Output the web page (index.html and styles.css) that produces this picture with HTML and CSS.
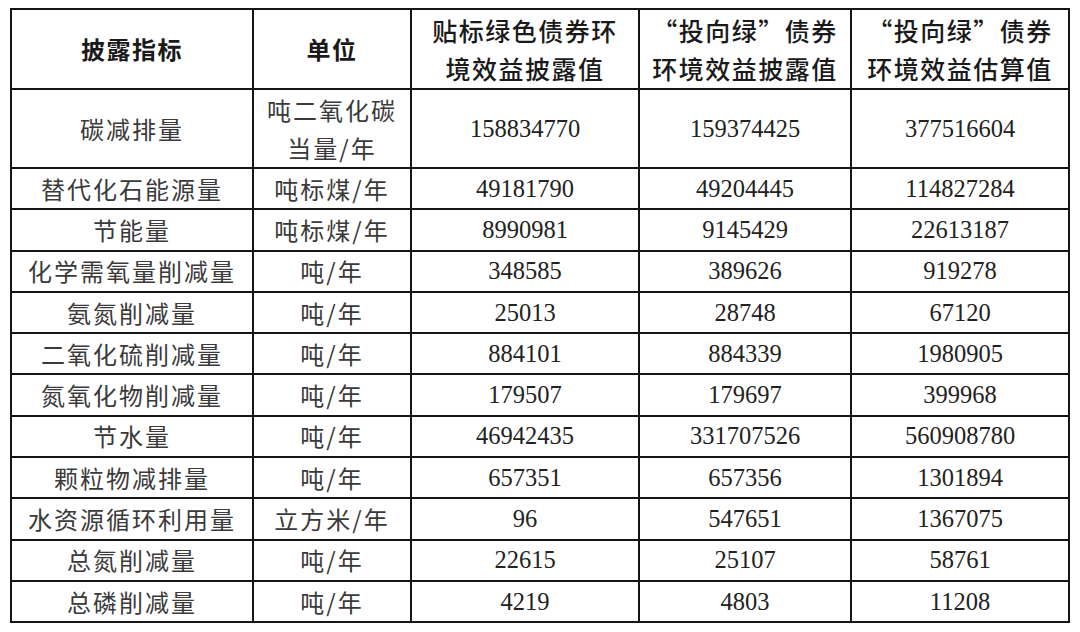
FILE: index.html
```html
<!DOCTYPE html>
<html lang="zh-CN">
<head>
<meta charset="utf-8">
<link rel="stylesheet" href="styles.css">
</head>
<body>
<table class="data">
  <colgroup>
    <col class="c1"><col class="c2"><col class="c3"><col class="c4"><col class="c5">
  </colgroup>
  <thead>
    <tr class="head">
      <th class="hb">披露指标</th>
      <th class="hb">单位</th>
      <th class="hs two">贴标绿色债券环<br>境效益披露值</th>
      <th class="hs two">“投向绿”债券<br>环境效益披露值</th>
      <th class="hs two">“投向绿”债券<br>环境效益估算值</th>
    </tr>
  </thead>
  <tbody>
    <tr class="tall"><td class="zh">碳减排量</td><td class="zh two">吨二氧化碳<br>当量/年</td><td class="num">158834770</td><td class="num">159374425</td><td class="num">377516604</td></tr>
    <tr><td class="zh">替代化石能源量</td><td class="zh">吨标煤/年</td><td class="num">49181790</td><td class="num">49204445</td><td class="num">114827284</td></tr>
    <tr><td class="zh">节能量</td><td class="zh">吨标煤/年</td><td class="num">8990981</td><td class="num">9145429</td><td class="num">22613187</td></tr>
    <tr><td class="zh">化学需氧量削减量</td><td class="zh">吨/年</td><td class="num">348585</td><td class="num">389626</td><td class="num">919278</td></tr>
    <tr><td class="zh">氨氮削减量</td><td class="zh">吨/年</td><td class="num">25013</td><td class="num">28748</td><td class="num">67120</td></tr>
    <tr><td class="zh">二氧化硫削减量</td><td class="zh">吨/年</td><td class="num">884101</td><td class="num">884339</td><td class="num">1980905</td></tr>
    <tr><td class="zh">氮氧化物削减量</td><td class="zh">吨/年</td><td class="num">179507</td><td class="num">179697</td><td class="num">399968</td></tr>
    <tr><td class="zh">节水量</td><td class="zh">吨/年</td><td class="num">46942435</td><td class="num">331707526</td><td class="num">560908780</td></tr>
    <tr><td class="zh">颗粒物减排量</td><td class="zh">吨/年</td><td class="num">657351</td><td class="num">657356</td><td class="num">1301894</td></tr>
    <tr><td class="zh">水资源循环利用量</td><td class="zh">立方米/年</td><td class="num">96</td><td class="num">547651</td><td class="num">1367075</td></tr>
    <tr><td class="zh">总氮削减量</td><td class="zh">吨/年</td><td class="num">22615</td><td class="num">25107</td><td class="num">58761</td></tr>
    <tr><td class="zh">总磷削减量</td><td class="zh">吨/年</td><td class="num">4219</td><td class="num">4803</td><td class="num">11208</td></tr>
  </tbody>
</table>
</body>
</html>
```
FILE: styles.css
```css
html, body {
  margin: 0;
  padding: 0;
  background: #ffffff;
}
body {
  padding: 8px 0 0 10px;
  font-family: "Noto Sans CJK SC", sans-serif;
}
.data {
  border-collapse: collapse;
  table-layout: fixed;
  width: 1060px;
}
.c1 { width: 242px; }
.c2 { width: 158px; }
.c3 { width: 228px; }
.c4 { width: 212px; }
.c5 { width: 218px; }

.data th, .data td {
  border: 2.5px solid #151515;
  padding: 0;
  text-align: center;
  vertical-align: middle;
  overflow: hidden;
  white-space: nowrap;
  line-height: 32px;
}
.data thead tr { height: 80px; }
.data tbody tr { height: 41.3px; }
.data tbody tr.tall { height: 79px; }
.data th.two, .data td.two { line-height: 38px; }

.hb {
  font-weight: 700;
  font-size: 24px;
  letter-spacing: 1.5px;
  color: #1a1a1a;
}
.hs {
  font-weight: 500;
  font-size: 25px;
  letter-spacing: 1.5px;
  color: #1a1a1a;
}
.zh {
  font-weight: 400;
  font-size: 24px;
  letter-spacing: 2px;
  color: #3a3a3a;
}
.num {
  font-family: "Liberation Serif", "Times New Roman", serif;
  font-size: 24.5px;
  color: #222222;
}
```
